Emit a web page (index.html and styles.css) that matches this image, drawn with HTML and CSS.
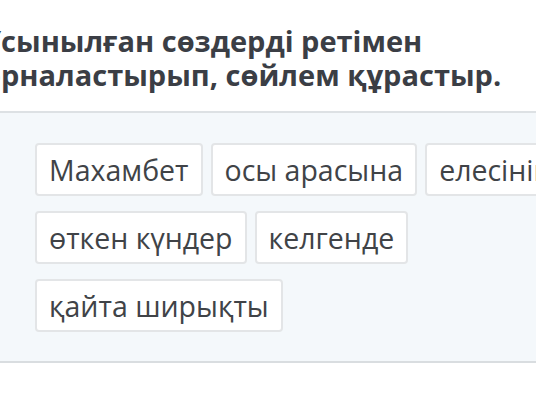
FILE: index.html
```html
<!DOCTYPE html>
<html>

<head>
    <title>Сөйлем құрастыр</title>
    <link rel="stylesheet" href="styles.css">
</head>

<body>
    <div class="question">
        <h2 class="prompt">Ұсынылған сөздерді ретімен<br>орналастырып, сөйлем құрастыр.</h2>
    </div>

    <div class="bank">
        <div class="words">
            <span class="word">Махамбет</span>
            <span class="word">осы арасына</span>
            <span class="word">елесінің</span>
            <span class="word">өткен күндер</span>
            <span class="word">келгенде</span>
            <span class="word">қайта ширықты</span>
        </div>
    </div>
</body>

</html>
```

FILE: styles.css
```css
html,
body {
    margin: 0;
    padding: 0;
    overflow: hidden;
    background-color: #fff;
    font-family: "Open Sans", Arial, sans-serif;
}

body {
    width: 536px;
    height: 420px;
}

.question {
    padding-top: 24px;
    margin-bottom: 19px;
}

.prompt {
    margin: 0 0 0 -17px;
    font-size: 29px;
    line-height: 34px;
    font-weight: bold;
    color: #3b3e45;
    white-space: nowrap;
}

.bank {
    background-color: #f4f8fb;
    border-top: 2px solid #dde1e4;
    border-bottom: 2px solid #d9dde0;
    padding: 30px 0 29px 35px;
}

.words {
    display: flex;
    flex-wrap: wrap;
    column-gap: 8px;
    row-gap: 15px;
    width: 580px;
}

.word {
    display: inline-block;
    padding: 7px 12px 6px 12px;
    background-color: #fff;
    border: 2px solid #e3e5e7;
    border-radius: 4px;
    font-size: 28.5px;
    line-height: 36px;
    color: #404347;
    white-space: nowrap;
}
```
